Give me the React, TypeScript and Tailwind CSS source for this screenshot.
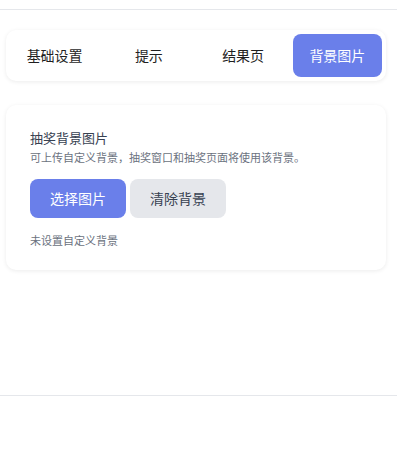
const tabs = ['基础设置', '提示', '结果页', '背景图片'];

export default function App() {
  const active = 3;
  return (
    <div
      className="w-[397px] h-[453px] bg-white"
      style={{ fontFamily: '"Noto Sans CJK SC", "Noto Sans", sans-serif' }}
    >
      <div className="h-[10px] border-b border-gray-200" />
      <div className="h-[386px] border-b border-gray-200 px-[6px] pt-[20px]">
        <div className="grid grid-cols-4 gap-[5px] p-1 bg-white rounded-[10px] shadow-[0_1px_4px_rgba(0,0,0,0.08)] w-[380px]">
          {tabs.map((t, i) => (
            <div
              key={t}
              className={
                i === active
                  ? 'h-[43px] flex items-center justify-center rounded-lg bg-[#6a7fea] text-white text-[14px]'
                  : 'h-[43px] flex items-center justify-center rounded-lg text-[#1f1f1f] text-[14px]'
              }
            >
              {t}
            </div>
          ))}
        </div>

        <div className="mt-[24px] w-[380px] rounded-[10px] bg-white shadow-[0_1px_4px_rgba(0,0,0,0.08)] px-[24px] pt-[24px] pb-[22px]">
          <div className="text-[13px] leading-[18px] text-[#374151]">抽奖背景图片</div>
          <div className="mt-[2px] text-[11px] leading-[16px] text-[#6b7280]">
            可上传自定义背景，抽奖窗口和抽奖页面将使用该背景。
          </div>
          <div className="mt-[14px] flex gap-[4px]">
            <button className="w-[96px] h-[39px] rounded-lg bg-[#6a7fea] text-white text-[14px]">
              选择图片
            </button>
            <button className="w-[96px] h-[39px] rounded-lg bg-[#e5e7eb] text-[#374151] text-[14px]">
              清除背景
            </button>
          </div>
          <div className="mt-[14px] text-[11px] leading-[16px] text-[#6b7280]">未设置自定义背景</div>
        </div>
      </div>
    </div>
  );
}
